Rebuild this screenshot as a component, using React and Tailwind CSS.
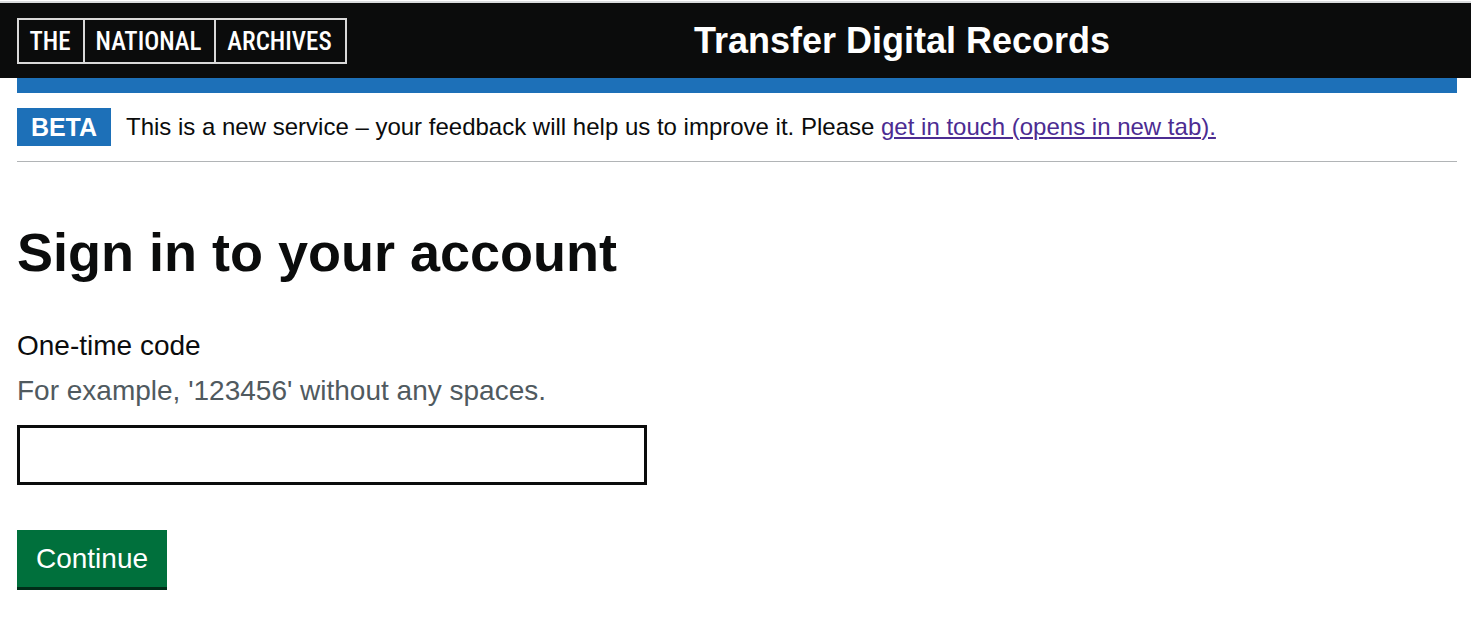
const logoCell = "flex items-center justify-center pt-[2px] pr-[2px]";

function Logo() {
  return (
    <a
      href="#home"
      aria-label="The National Archives"
      className="flex h-[46px] w-[330px] border-2 border-[#d9d9d9] font-['Roboto_Condensed','Liberation_Sans_Narrow','Roboto',sans-serif] text-[25px] leading-none font-medium text-white"
    >
      <span className={`${logoCell} w-[64px]`}>THE</span>
      <span className={`${logoCell} flex-1 border-x-2 border-[#d9d9d9]`}>NATIONAL</span>
      <span className={`${logoCell} w-[129px]`}>ARCHIVES</span>
    </a>
  );
}

export default function App() {
  return (
    <div className="bg-white pt-px font-['Liberation_Sans',Arial,sans-serif] text-[#0b0c0c]">
      <header className="border-t-2 border-[#dadcdd] bg-[#0b0c0c]">
        <div className="flex h-[75px] items-center pr-[14px] pl-[17px]">
          <Logo />
          <p className="flex-1 text-center text-[36px] leading-[45px] font-bold text-white">
            Transfer Digital Records
          </p>
        </div>
      </header>

      <div className="pr-[14px] pl-[17px]">
        <div className="h-[15px] bg-[#1d70b8]" />
        <div className="flex items-center gap-[15px] border-b border-[#b1b4b6] py-[15px]">
          <strong className="flex h-[38px] w-[94px] items-center justify-center bg-[#1d70b8] text-[25px] leading-none font-bold text-white">
            BETA
          </strong>
          <p className="text-[24px] leading-[30px]">
            This is a new service – your feedback will help us to improve it. Please{" "}
            <a href="#contact" className="text-[#4c2c92] underline decoration-2 underline-offset-2">
              get in touch (opens in new tab).
            </a>
          </p>
        </div>

        <main className="pt-[60px] pb-[30px]">
          <h1 className="text-[54px] leading-[60px] font-bold">Sign in to your account</h1>
          <form className="mt-[45px] flex flex-col items-start" onSubmit={(e) => e.preventDefault()}>
            <label htmlFor="code" className="text-[28px] leading-[38px]">
              One-time code
            </label>
            <p id="code-hint" className="mt-[7px] text-[28px] leading-[38px] text-[#505a5f]">
              For example, '123456' without any spaces.
            </p>
            <input
              id="code"
              type="text"
              inputMode="numeric"
              aria-describedby="code-hint"
              className="mt-[15px] h-[60px] w-full max-w-[630px] border-3 border-[#0b0c0c] px-2 text-[28px] outline-none focus:ring-3 focus:ring-[#ffdd00]"
            />
            <button
              type="submit"
              className="mt-[45px] h-[60px] w-[150px] border-b-3 border-[#002d18] bg-[#00703c] text-[28px] leading-[30px] text-white"
            >
              Continue
            </button>
          </form>
        </main>
      </div>
    </div>
  );
}
